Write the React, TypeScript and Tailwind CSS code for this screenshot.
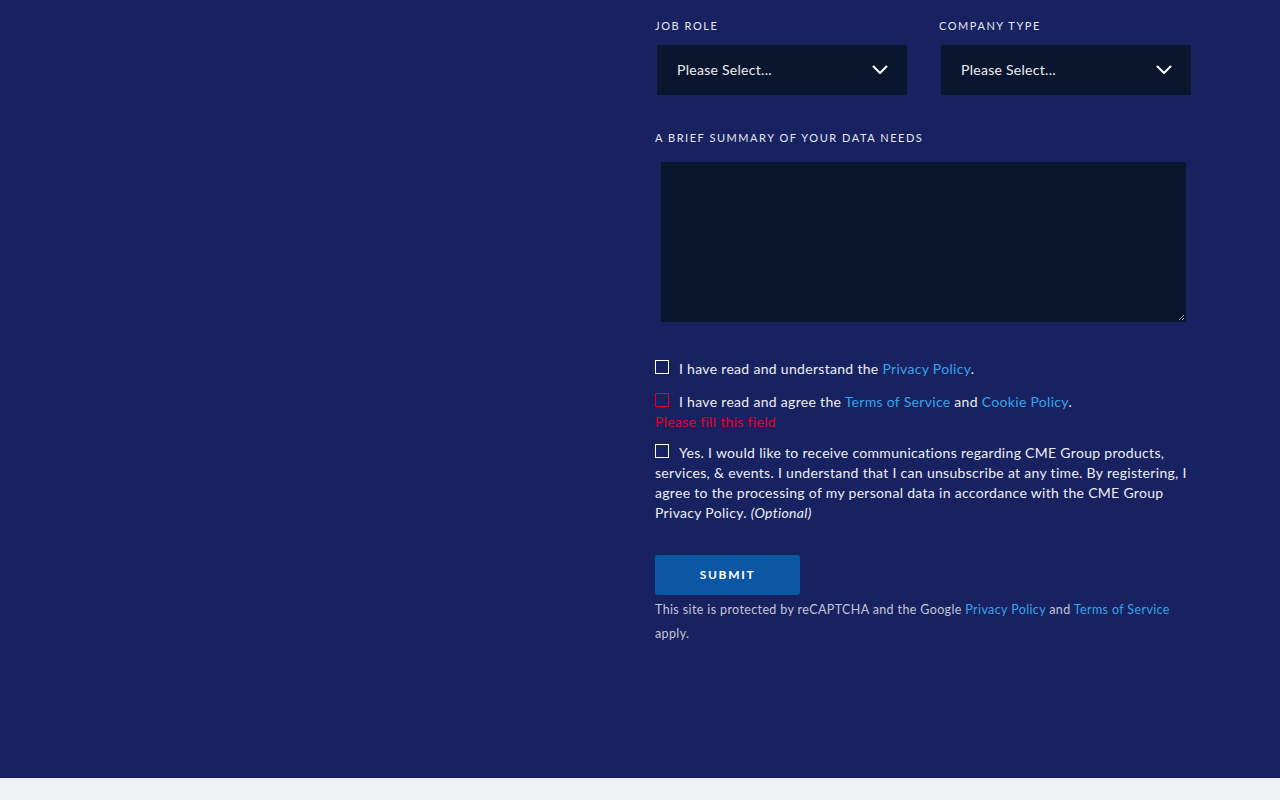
import { ReactNode } from "react";

const font = { fontFamily: "Lato, 'Noto Sans', sans-serif" };

function Chevron() {
  return (
    <svg width="16" height="10" viewBox="0 0 16 10" fill="none" className="shrink-0">
      <path d="M1.5 1.5 L8 8 L14.5 1.5" stroke="#ffffff" strokeWidth="2" strokeLinecap="round" strokeLinejoin="round" />
    </svg>
  );
}

function Label({ children }: { children: ReactNode }) {
  return (
    <div className="text-[11px] leading-4 tracking-[0.14em] uppercase text-[#e4e6f0]">{children}</div>
  );
}

function SelectBox() {
  return (
    <div className="mt-[11px] mx-[2px] h-[50px] w-[250px] bg-[#0a162e] flex items-center justify-between pl-5 pr-[19px]">
      <span className="text-[14px] tracking-[0.02em] text-[#eceef4] -mt-[2px]">Please Select...</span>
      <Chevron />
    </div>
  );
}

function Box({ error }: { error?: boolean }) {
  return (
    <span
      className={`inline-block w-[14px] h-[14px] border ${error ? "border-[#e4002b]" : "border-white"} shrink-0 align-top mt-[1px] mr-[10px]`}
    />
  );
}

const link = "text-[#35a4ea]";

export default function App() {
  return (
    <div className="min-h-[800px] flex flex-col" style={font}>
      <div className="bg-[#182260] h-[778px] flex">
        <div className="w-[655px] shrink-0" />
        <div className="w-[537px] pt-[18px]">
          <div className="flex gap-[16px]">
            <div className="w-[268px] shrink-0">
              <Label>Job Role</Label>
              <SelectBox />
            </div>
            <div className="flex-1">
              <Label>Company Type</Label>
              <SelectBox />
            </div>
          </div>

          <div className="mt-[35px]">
            <Label>A Brief Summary of Your Data Needs</Label>
            <div className="mt-[16px] mx-[6px] h-[160px] bg-[#0a162e] relative">
              <svg width="8" height="8" viewBox="0 0 8 8" className="absolute right-[1px] bottom-[1px]">
                <path d="M7 2 L2 7 M7 5 L5 7" stroke="#9aa0b0" strokeWidth="1" />
              </svg>
            </div>
          </div>

          <div className="mt-[37px] text-[14px] leading-5 tracking-[0.022em] text-[#eceef4]">
            <div>
              <Box />
              I have read and understand the <span className={link}>Privacy Policy</span>.
            </div>
            <div className="mt-[13px]">
              <Box error />
              I have read and agree the <span className={link}>Terms of Service</span> and{" "}
              <span className={link}>Cookie Policy</span>.
            </div>
            <div className="text-[#e4002b]">Please fill this field</div>
            <div className="mt-[11px]">
              <Box />
              Yes. I would like to receive communications regarding CME Group products, services, &amp; events. I
              understand that I can unsubscribe at any time. By registering, I agree to the processing of my personal
              data in accordance with the CME Group Privacy Policy. <i>(Optional)</i>
            </div>
          </div>

          <button className="mt-[32px] w-[145px] h-[40px] rounded-[3px] bg-[#0b57a4] text-white text-[12px] font-bold tracking-[0.14em]">
            SUBMIT
          </button>
          <p className="mt-[3px] text-[12.5px] leading-6 tracking-[0.03em] text-[#c3c7d6]">
            This site is protected by reCAPTCHA and the Google <span className={link}>Privacy Policy</span> and{" "}
            <span className={link}>Terms of Service</span> apply.
          </p>
        </div>
      </div>
      <div className="flex-1 bg-[#eef2f4] h-[22px]" />
    </div>
  );
}
